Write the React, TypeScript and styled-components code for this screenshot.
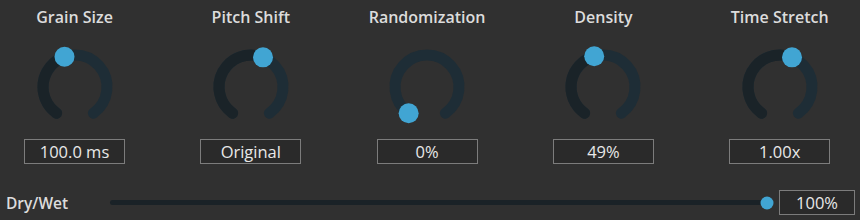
import styled, { createGlobalStyle } from "styled-components";

const GlobalStyle = createGlobalStyle`
  html, body {
    margin: 0;
    padding: 0;
    background: #303030;
  }
  body {
    font-family: "Open Sans", "Noto Sans", sans-serif;
    color: #e2e2e2;
  }
`;

const Panel = styled.div`
  width: 860px;
  height: 220px;
  box-sizing: border-box;
  background: #303030;
  display: flex;
  flex-direction: column;
  padding: 7px 5px 0 5px;
`;

const KnobRow = styled.div`
  display: grid;
  grid-template-columns: repeat(5, 101px);
  column-gap: 75.3px;
  padding-left: 19px;
`;

const KnobColumn = styled.div`
  display: flex;
  flex-direction: column;
  align-items: center;
`;

const Label = styled.div`
  font-size: 16px;
  font-weight: 600;
  line-height: 20px;
  color: #dcdcdc;
  white-space: nowrap;
`;

const KnobSvg = styled.svg`
  display: block;
  margin-top: 15px;
`;

const ValueBox = styled.div<{ $width?: number }>`
  width: ${(p) => p.$width ?? 101}px;
  height: 25px;
  box-sizing: border-box;
  border: 1px solid #7c7c7c;
  background: #2a2a2a;
  display: flex;
  align-items: center;
  justify-content: center;
  font-size: 16.5px;
  font-weight: 500;
  color: #e8e8e8;
  margin-top: 7px;
  flex-shrink: 0;
`;

const SliderRow = styled.div`
  display: flex;
  align-items: center;
  margin-top: 26px;
`;

const SliderLabel = styled(Label)`
  width: 104px;
  padding-left: 1px;
  font-size: 15.5px;
`;

const Track = styled.div`
  position: relative;
  flex: 1;
  height: 5px;
  border-radius: 3px;
  background: #1a2227;
  margin-right: 12px;
`;

const Thumb = styled.div`
  position: absolute;
  top: 50%;
  width: 13px;
  height: 13px;
  border-radius: 50%;
  background: #41a5d3;
  transform: translate(-50%, -50%);
`;

const SliderValue = styled(ValueBox)`
  margin-top: 0;
`;

const START = -145;
const SWEEP = 290;
const R = 32;
const C = 45;

const point = (deg: number) => {
  const a = (deg * Math.PI) / 180;
  return [C + R * Math.sin(a), C - R * Math.cos(a)];
};

const arc = (from: number, to: number) => {
  const [x1, y1] = point(from);
  const [x2, y2] = point(to);
  const large = to - from > 180 ? 1 : 0;
  return `M ${x1} ${y1} A ${R} ${R} 0 ${large} 1 ${x2} ${y2}`;
};

const Knob = ({ value }: { value: number }) => {
  const angle = START + value * SWEEP;
  const [hx, hy] = point(angle);
  return (
    <KnobSvg width={90} height={90} viewBox="0 0 90 90">
      <path d={arc(START, START + SWEEP)} fill="none" stroke="#1e2d36" strokeWidth={11} strokeLinecap="round" />
      {value > 0 && (
        <path d={arc(START, angle)} fill="none" stroke="#1a2328" strokeWidth={11} strokeLinecap="round" />
      )}
      <circle cx={hx} cy={hy} r={10} fill="#41a5d3" />
    </KnobSvg>
  );
};

const knobs = [
  { label: "Grain Size", value: 0.434, text: "100.0 ms" },
  { label: "Pitch Shift", value: 0.576, text: "Original" },
  { label: "Randomization", value: 0, text: "0%" },
  { label: "Density", value: 0.445, text: "49%" },
  { label: "Time Stretch", value: 0.576, text: "1.00x" },
];

export default function App() {
  const mix = 100;
  return (
    <>
      <GlobalStyle />
      <Panel>
        <KnobRow>
          {knobs.map((k) => (
            <KnobColumn key={k.label}>
              <Label>{k.label}</Label>
              <Knob value={k.value} />
              <ValueBox>{k.text}</ValueBox>
            </KnobColumn>
          ))}
        </KnobRow>
        <SliderRow>
          <SliderLabel>Dry/Wet</SliderLabel>
          <Track>
            <Thumb style={{ left: `${mix}%` }} />
          </Track>
          <SliderValue $width={76}>{mix}%</SliderValue>
        </SliderRow>
      </Panel>
    </>
  );
}
